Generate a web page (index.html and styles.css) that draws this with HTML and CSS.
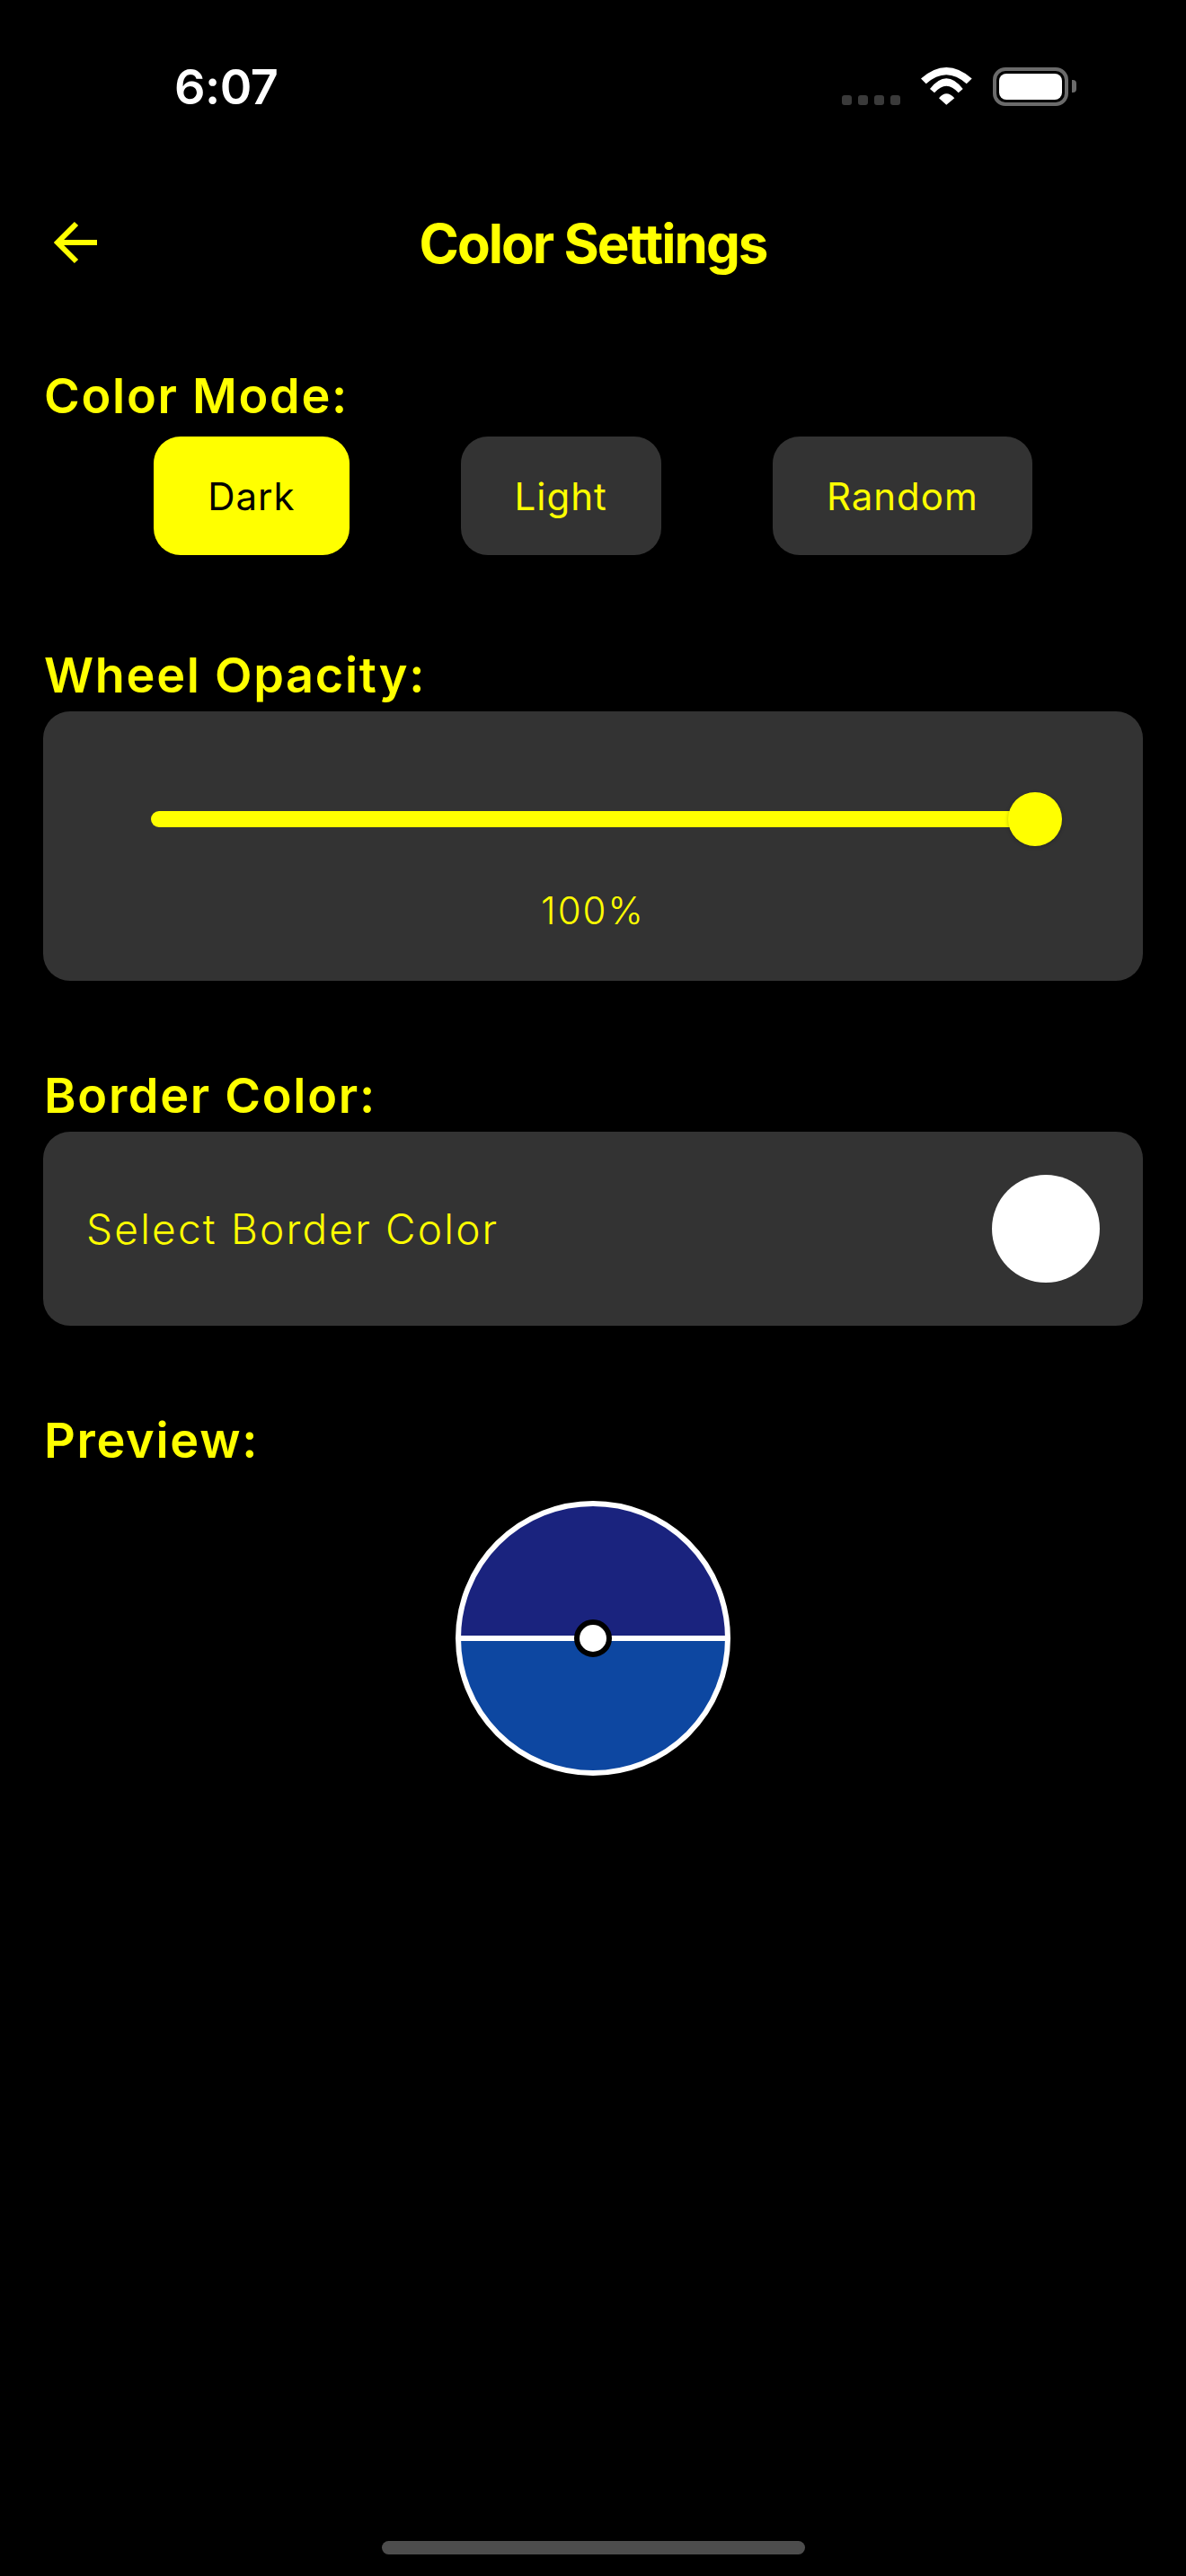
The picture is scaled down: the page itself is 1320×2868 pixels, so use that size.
FILE: index.html
```html
<!DOCTYPE html>
<html lang="en">
<head>
<meta charset="utf-8">
<title>Color Settings</title>
<link rel="stylesheet" href="styles.css">
</head>
<body>
<div class="screen">
  <div class="status">
    <span class="time">6:07</span>
    <div class="status-icons">
      <div class="dots"><i></i><i></i><i></i><i></i></div>
      <svg class="wifi" viewBox="0 0 57 42" width="57" height="42"><path d="M0 12.5Q28.3-12.5 56.7 12.5L50.7 18.3Q28.3-1.7 5.7 18.3Z"/><path d="M10 24Q28.3.6 46.7 24L41.7 28.3Q28.3 13 15 28.3Z"/><path d="M20 34.3Q28.3 24.3 37.3 34.3L28.3 41.7Z"/></svg>
      <div class="battery"><div class="battery-fill"></div></div>
      <div class="battery-nub"></div>
    </div>
  </div>
  <header class="nav">
    <svg class="back" viewBox="0 0 72 72" width="72" height="72"><path d="M60 35H17M37 14L16 35L37 56"/></svg>
    <h1 class="title">Color Settings</h1>
  </header>
  <main class="content">
    <section class="section">
      <h2 class="heading">Color Mode:</h2>
      <div class="modes">
        <button class="mode mode-active">Dark</button>
        <button class="mode">Light</button>
        <button class="mode">Random</button>
      </div>
    </section>
    <section class="section">
      <h2 class="heading">Wheel Opacity:</h2>
      <div class="panel panel-slider">
        <div class="slider"><div class="track"></div><div class="thumb"></div></div>
        <div class="percent">100%</div>
      </div>
    </section>
    <section class="section">
      <h2 class="heading">Border Color:</h2>
      <div class="panel panel-border">
        <span class="border-label">Select Border Color</span>
        <div class="swatch"></div>
      </div>
    </section>
    <section class="section">
      <h2 class="heading">Preview:</h2>
      <svg class="wheel" viewBox="0 0 306 306" width="306" height="306">
        <path class="wheel-top" d="M3 153A150 150 0 0 1 303 153Z"/>
        <path class="wheel-bottom" d="M3 153A150 150 0 0 0 303 153Z"/>
        <circle class="wheel-line" cx="153" cy="153" r="150"/>
        <path class="wheel-line" d="M3 153H303"/>
        <circle class="wheel-hub" cx="153" cy="153" r="18"/>
      </svg>
    </section>
  </main>
  <div class="home-bar"></div>
</div>
</body>
</html>
```
FILE: styles.css
```css
* { box-sizing: border-box; }
html, body { margin: 0; padding: 0; background: #000; }
.screen {
  position: relative;
  width: 1320px;
  height: 2868px;
  overflow: hidden;
  background: #000;
  font-family: Inter, "Liberation Sans", sans-serif;
  color: #ff0;
}
.status {
  display: flex;
  justify-content: space-between;
  align-items: flex-start;
  height: 235px;
  padding: 67px 122px 0 194px;
}
.time {
  font-size: 54px;
  line-height: 60px;
  font-weight: 600;
  color: #fff;
  letter-spacing: -0.5px;
}
.status-icons {
  display: flex;
  align-items: flex-end;
  margin-top: 8px;
  height: 43px;
}
.dots { display: flex; gap: 7px; margin-bottom: 1px; }
.dots i { display: block; width: 11px; height: 11px; border-radius: 3px; background: #3a3a3a; }
.wifi { display: block; margin: 0 23px 1px 23px; fill: #fff; }
.battery {
  width: 84px;
  height: 43px;
  border: 4px solid #6b6b6b;
  border-radius: 14px;
  padding: 3px;
}
.battery-fill { width: 100%; height: 100%; background: #fff; border-radius: 8px; }
.battery-nub {
  width: 5px;
  height: 14px;
  margin: 0 0 15px 4px;
  background: #6b6b6b;
  border-radius: 0 4px 4px 0;
}
.nav {
  position: relative;
  display: flex;
  justify-content: center;
  height: 72px;
}
.back {
  position: absolute;
  left: 48px;
  top: 0;
  fill: none;
  stroke: #ff0;
  stroke-width: 6;
}
.title {
  margin: 0;
  font-size: 60px;
  line-height: 72px;
  font-weight: 700;
  letter-spacing: -2px;
}
.content {
  display: flex;
  flex-direction: column;
  gap: 96px;
  padding: 102px 48px 0;
}
.section { display: flex; flex-direction: column; }
.heading {
  margin: 0 0 10px;
  padding: 2px 0 0 1px;
  height: 62px;
  font-size: 54px;
  line-height: 60px;
  font-weight: 600;
  letter-spacing: 1.7px;
}
.modes {
  display: flex;
  justify-content: center;
  gap: 124px;
  margin: 5px 0 6px;
}
.mode {
  height: 132px;
  padding: 0 60px;
  border: 0;
  border-radius: 30px;
  background: #333;
  color: #ff0;
  font-family: inherit;
  font-size: 42px;
  font-weight: 400;
  letter-spacing: 1px;
}
.mode-active { background: #ff0; color: #000; }
.panel { background: #333; border-radius: 30px; }
.panel-slider { height: 300px; padding: 90px 0 0 120px; }
.slider { position: relative; width: 1014px; height: 60px; }
.track { width: 984px; height: 18px; margin-top: 21px; position: absolute; top: 0; left: 0; border-radius: 9px; background: #ff0; }
.thumb {
  position: absolute;
  right: 0;
  top: 0;
  width: 60px;
  height: 60px;
  border-radius: 50%;
  background: #ff0;
  box-shadow: 0 1px 4px rgba(0, 0, 0, 0.25);
}
.percent {
  margin: 47px 0 0 -120px;
  text-align: center;
  font-size: 42px;
  line-height: 50px;
  font-weight: 300;
  letter-spacing: 2px;
}
.panel-border {
  display: flex;
  align-items: center;
  justify-content: space-between;
  height: 216px;
  padding: 0 48px;
}
.border-label {
  font-size: 46px;
  line-height: 58px;
  font-weight: 300;
  letter-spacing: 2.2px;
}
.swatch { width: 120px; height: 120px; border-radius: 50%; background: #fff; }
.wheel { display: block; margin: 27px auto 0; }
.wheel-top { fill: #1a237e; }
.wheel-bottom { fill: #0d47a1; }
.wheel-line { fill: none; stroke: #fff; stroke-width: 6; }
.wheel-hub { fill: #fff; stroke: #000; stroke-width: 6; }
.home-bar {
  position: absolute;
  left: 425px;
  top: 2829px;
  width: 471px;
  height: 15px;
  border-radius: 8px;
  background: #4d4d4d;
}
```
